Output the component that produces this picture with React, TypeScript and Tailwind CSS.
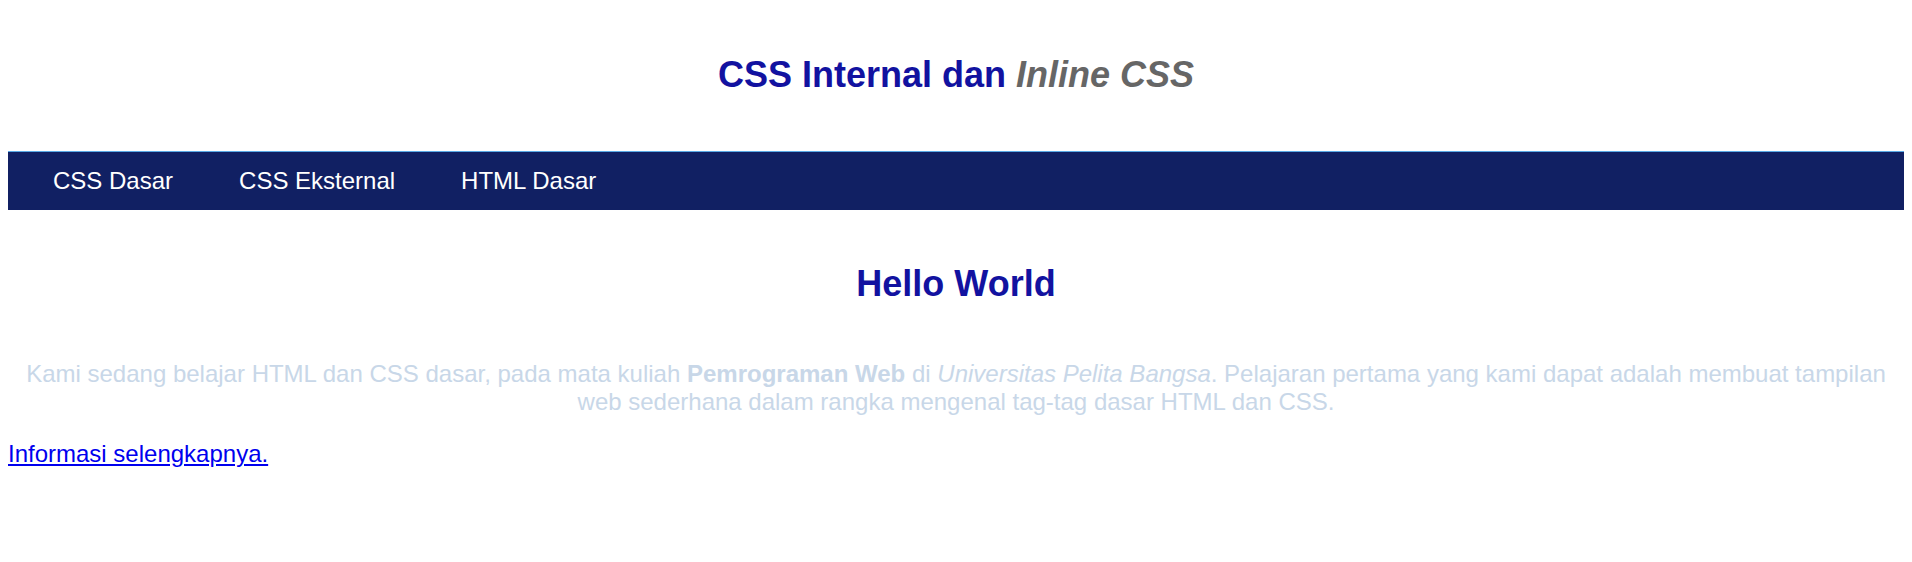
export default function App() {
  return (
    <div className="p-[8px] bg-white leading-[normal]" style={{ fontFamily: '"Liberation Sans", Arial, sans-serif' }}>
      <h1 className="mt-[46px] mb-[55px] text-center text-[36px] font-bold text-[#1212a0]">
        CSS Internal dan <i className="text-[#666666]">Inline CSS</i>
      </h1>
      <nav className="border-t border-[#5aaae6] bg-[#112063] py-[15px] pl-[45px]">
        <ul className="flex gap-[66px] text-[24px] text-white">
          <li>CSS Dasar</li>
          <li>CSS Eksternal</li>
          <li>HTML Dasar</li>
        </ul>
      </nav>
      <h2 className="mt-[53px] text-center text-[36px] font-bold text-[#1212a0]">Hello World</h2>
      <p className="mt-[55px] text-center text-[24px] text-[#c8d7e8]">
        Kami sedang belajar HTML dan CSS dasar, pada mata kuliah <b>Pemrograman Web</b> di{' '}
        <i>Universitas Pelita Bangsa</i>. Pelajaran pertama yang kami dapat adalah membuat tampilan web
        sederhana dalam rangka mengenal tag-tag dasar HTML dan CSS.
      </p>
      <a href="#" className="mt-[24px] inline-block text-[24px] text-[#0000ee] underline">
        Informasi selengkapnya.
      </a>
    </div>
  );
}
